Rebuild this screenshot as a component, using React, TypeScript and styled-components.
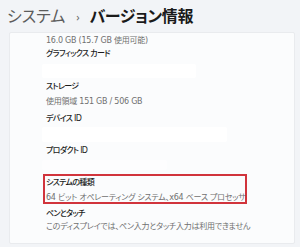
import React from "react";
import styled, { createGlobalStyle } from "styled-components";

const Global = createGlobalStyle`
  html, body { margin: 0; padding: 0; }
  body {
    width: 300px;
    height: 247px;
    overflow: hidden;
    background: #f2f4f7;
    font-family: "Noto Sans", "Noto Sans CJK JP", sans-serif;
    font-feature-settings: "palt";
  }
`;

const Page = styled.div`
  width: 300px;
  height: 247px;
  display: flex;
  flex-direction: column;
  box-sizing: border-box;
  padding: 0 5px 3px 9px;
`;

const Header = styled.h1`
  margin: 0 0 0 -2px;
  height: 32px;
  display: flex;
  align-items: center;
  font-size: 16px;
  font-weight: 400;
  line-height: 1;
  padding-bottom: 1px;
  box-sizing: border-box;
`;

const Crumb = styled.span<{ $current?: boolean }>`
  color: ${(p) => (p.$current ? "#1a1a1a" : "#5c5c5c")};
  font-weight: ${(p) => (p.$current ? 600 : 400)};
  letter-spacing: ${(p) => (p.$current ? "-0.4px" : "0")};
`;

const Chevron = styled.span`
  color: #6a6a6a;
  font-size: 11px;
  margin: 0 10px 0 11px;
  padding-top: 1px;
`;

const Card = styled.section`
  flex: 1;
  background: #fbfcfd;
  border: 1px solid #e9ebee;
  border-radius: 2px;
  display: flex;
  flex-direction: column;
  padding: 1px 0 0 36px;
  box-sizing: border-box;
`;

const Line = styled.div<{ $kind: "label" | "value"; $mt?: number }>`
  height: 13px;
  line-height: 13px;
  font-family: "DejaVu Sans", "Noto Sans CJK JP", sans-serif;
  font-size: 8px;
  letter-spacing: ${(p) => (p.$kind === "label" ? "-0.7px" : "-0.25px")};
  white-space: nowrap;
  margin-top: ${(p) => p.$mt ?? 0}px;
  color: ${(p) => (p.$kind === "label" ? "#1c1c1c" : "#707070")};
  font-weight: ${(p) => (p.$kind === "label" ? 500 : 400)};
`;

const Redacted = styled.div<{ $w: number; $h: number; $mt: number; $faint?: boolean }>`
  width: ${(p) => p.$w}px;
  height: ${(p) => p.$h}px;
  margin: ${(p) => p.$mt}px 0 0 -4px;
  background: ${(p) => (p.$faint ? "#fdfdfe" : "#ffffff")};
  border-radius: 2px;
`;

const Highlight = styled.div`
  margin: 4px 0 0 -3px;
  width: 204px;
  height: 30px;
  box-sizing: border-box;
  border: 2px solid #d1343c;
  padding: 0 0 0 1px;
  display: flex;
  flex-direction: column;
`;

export default function App() {
  return (
    <>
      <Global />
      <Page>
        <Header>
          <Crumb>システム</Crumb>
          <Chevron>›</Chevron>
          <Crumb $current>バージョン情報</Crumb>
        </Header>
        <Card>
          <Line $kind="value">16.0 GB (15.7 GB 使用可能)</Line>
          <Line $kind="label">グラフィックス カード</Line>
          <Redacted $w={154} $h={14} $mt={4} />
          <Line $kind="label" $mt={2}>ストレージ</Line>
          <Line $kind="value" $mt={2}>使用領域 151 GB / 506 GB</Line>
          <Line $kind="label" $mt={4}>デバイス ID</Line>
          <Redacted $w={185} $h={15} $mt={2} />
          <Line $kind="label" $mt={2}>プロダクト ID</Line>
          <Redacted $w={125} $h={10} $mt={3} $faint />
          <Highlight>
            <Line $kind="label">システムの種類</Line>
            <Line $kind="value" $mt={2}>64 ビット オペレーティング システム、x64 ベース プロセッサ</Line>
          </Highlight>
          <Line $kind="label" $mt={3}>ペンとタッチ</Line>
          <Line $kind="value" $mt={0}>このディスプレイでは、ペン入力とタッチ入力は利用できません</Line>
        </Card>
      </Page>
    </>
  );
}
